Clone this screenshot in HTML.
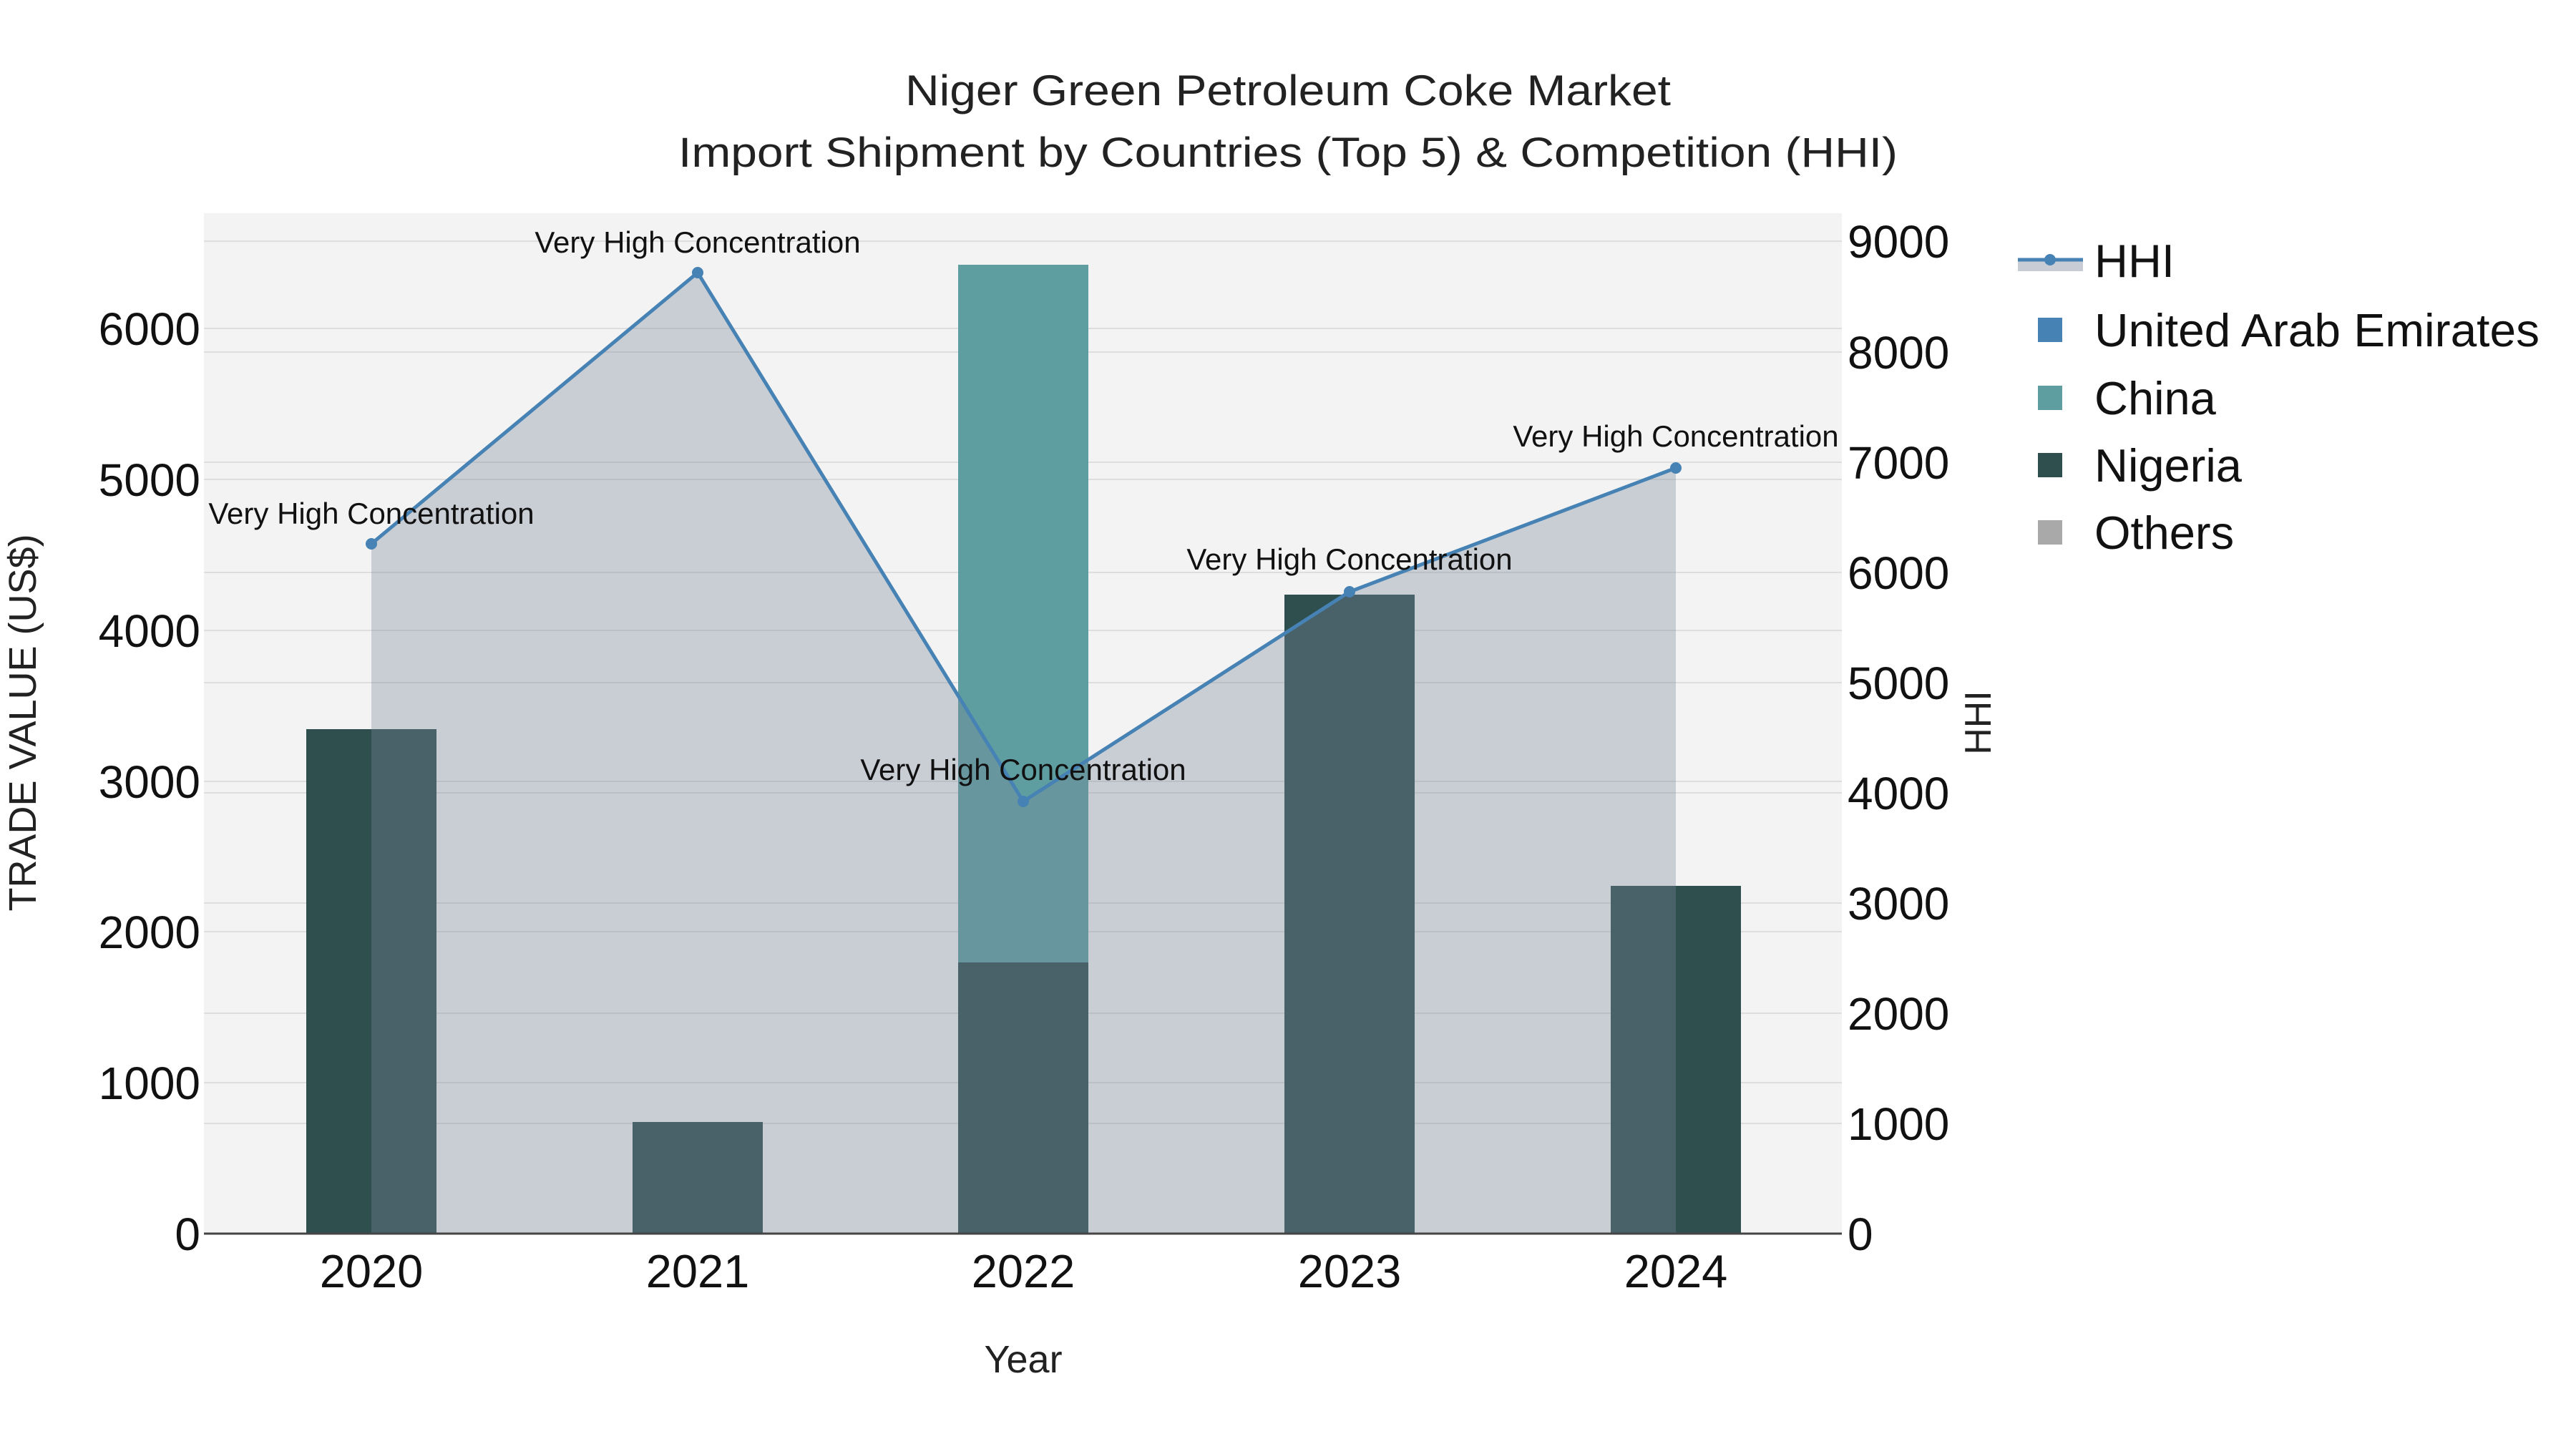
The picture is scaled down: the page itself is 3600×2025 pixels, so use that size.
<!DOCTYPE html>
<html><head><meta charset="utf-8"><style>
html,body{margin:0;padding:0;background:#fff;}
svg{display:block;font-family:"Liberation Sans",Arial,sans-serif;}
</style></head><body>
<svg width="3600" height="2025" viewBox="0 0 3600 2025" xmlns="http://www.w3.org/2000/svg">
<rect width="3600" height="2025" fill="#fff"/>
<text x="1800" y="147" font-size="60" text-anchor="middle" fill="#222" textLength="1070" lengthAdjust="spacingAndGlyphs">Niger Green Petroleum Coke Market</text>
<text x="1800" y="233" font-size="58" text-anchor="middle" fill="#222" textLength="1704" lengthAdjust="spacingAndGlyphs">Import Shipment by Countries (Top 5) &amp; Competition (HHI)</text>
<rect x="285" y="298" width="2289" height="1426" fill="#f3f3f3"/>
<g stroke="#dedede" stroke-width="2">
<line x1="285" x2="2574" y1="1513" y2="1513"/><line x1="285" x2="2574" y1="1302" y2="1302"/>
<line x1="285" x2="2574" y1="1092" y2="1092"/><line x1="285" x2="2574" y1="881" y2="881"/>
<line x1="285" x2="2574" y1="670" y2="670"/><line x1="285" x2="2574" y1="459" y2="459"/>
<line x1="285" x2="2574" y1="1570" y2="1570"/><line x1="285" x2="2574" y1="1416" y2="1416"/>
<line x1="285" x2="2574" y1="1262" y2="1262"/><line x1="285" x2="2574" y1="1108" y2="1108"/>
<line x1="285" x2="2574" y1="954" y2="954"/><line x1="285" x2="2574" y1="800" y2="800"/>
<line x1="285" x2="2574" y1="646" y2="646"/><line x1="285" x2="2574" y1="492" y2="492"/>
<line x1="285" x2="2574" y1="337" y2="337"/>
</g>
<g>
<rect x="428" y="1019" width="182" height="705" fill="#2F4F4F"/>
<rect x="884" y="1568" width="182" height="156" fill="#2F4F4F"/>
<rect x="1339" y="1345" width="182" height="379" fill="#2F4F4F"/>
<rect x="1339" y="370" width="182" height="975" fill="#5F9EA0"/>
<rect x="1795" y="831" width="182" height="893" fill="#2F4F4F"/>
<rect x="2251" y="1238" width="182" height="486" fill="#2F4F4F"/>
</g>
<polygon points="519,1724 519,760 975,381 1430,1120 1886,827 2342,654 2342,1724" fill="rgb(122,134,155)" fill-opacity="0.35"/>
<polyline points="519,760 975,381 1430,1120 1886,827 2342,654" fill="none" stroke="#4682B4" stroke-width="5"/>
<g fill="#4682B4"><circle cx="519" cy="760" r="8"/><circle cx="975" cy="381" r="8"/><circle cx="1430" cy="1120" r="8"/><circle cx="1886" cy="827" r="8"/><circle cx="2342" cy="654" r="8"/></g>
<line x1="285" x2="2574" y1="1724" y2="1724" stroke="#444" stroke-width="3"/>
<g font-size="42" text-anchor="middle" fill="#111">
<text x="519" y="732">Very High Concentration</text>
<text x="975" y="353">Very High Concentration</text>
<text x="1430" y="1090">Very High Concentration</text>
<text x="1886" y="796">Very High Concentration</text>
<text x="2342" y="624">Very High Concentration</text>
</g>
<g font-size="64" text-anchor="end" fill="#111">
<text x="280" y="1747">0</text><text x="280" y="1536">1000</text><text x="280" y="1325">2000</text>
<text x="280" y="1115">3000</text><text x="280" y="904">4000</text><text x="280" y="693">5000</text><text x="280" y="482">6000</text>
</g>
<g font-size="64" fill="#111">
<text x="2582" y="1747">0</text><text x="2582" y="1593">1000</text><text x="2582" y="1439">2000</text>
<text x="2582" y="1285">3000</text><text x="2582" y="1131">4000</text><text x="2582" y="977">5000</text>
<text x="2582" y="823">6000</text><text x="2582" y="669">7000</text><text x="2582" y="515">8000</text><text x="2582" y="360">9000</text>
</g>
<g font-size="65" text-anchor="middle" fill="#111">
<text x="519" y="1799">2020</text><text x="975" y="1799">2021</text><text x="1430" y="1799">2022</text><text x="1886" y="1799">2023</text><text x="2342" y="1799">2024</text>
</g>
<text x="1430" y="1918" font-size="54" text-anchor="middle" fill="#222">Year</text>
<text transform="translate(50,1010) rotate(-90)" font-size="54" text-anchor="middle" fill="#222">TRADE VALUE (US$)</text>
<text transform="translate(2782,1010) rotate(-90)" font-size="52" text-anchor="middle" fill="#222">HHI</text>
<rect x="2820" y="365" width="91" height="14" fill="#c8cdd5"/>
<line x1="2820" x2="2911" y1="363" y2="363" stroke="#4682B4" stroke-width="5"/>
<circle cx="2865" cy="363" r="8" fill="#4682B4"/>
<rect x="2848" y="444" width="34" height="34" fill="#4682B4"/>
<rect x="2848" y="539" width="34" height="34" fill="#5F9EA0"/>
<rect x="2848" y="633" width="34" height="34" fill="#2F4F4F"/>
<rect x="2848" y="727" width="34" height="34" fill="#A9A9A9"/>
<g font-size="65" fill="#111">
<text x="2927" y="387">HHI</text>
<text x="2927" y="484" textLength="622" lengthAdjust="spacingAndGlyphs">United Arab Emirates</text>
<text x="2927" y="579">China</text>
<text x="2927" y="673">Nigeria</text>
<text x="2927" y="767">Others</text>
</g>
</svg>
</body></html>
